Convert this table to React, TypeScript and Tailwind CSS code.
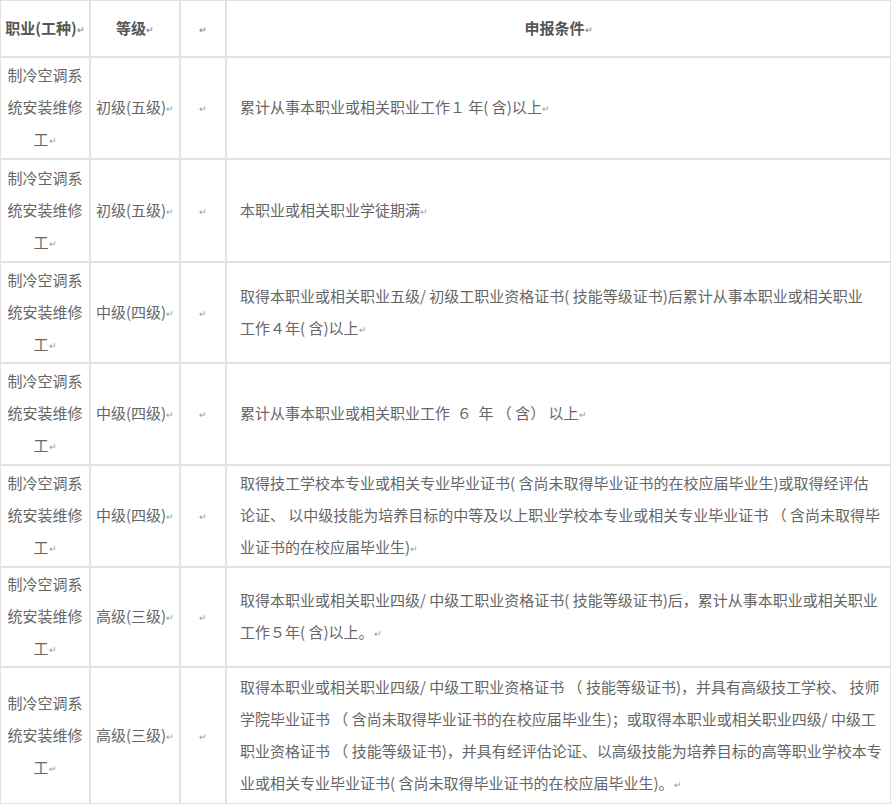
import React from 'react';

const occ = '制冷空调系统安装维修工';

const rows: { level: string; cond: string[]; h: string }[] = [
  { level: '初级(五级)', h: 'h-[102px]', cond: ['累计从事本职业或相关职业工作１ 年( 含)以上'] },
  { level: '初级(五级)', h: 'h-[103px]', cond: ['本职业或相关职业学徒期满'] },
  {
    level: '中级(四级)',
    h: 'h-[101px]',
    cond: ['取得本职业或相关职业五级/ 初级工职业资格证书( 技能等级证书)后累计从事本职业或相关职业', '工作４年( 含)以上'],
  },
  { level: '中级(四级)', h: 'h-[102px]', cond: ['累计从事本职业或相关职业工作  ６  年 （ 含） 以上'] },
  {
    level: '中级(四级)',
    h: 'h-[102px]',
    cond: [
      '取得技工学校本专业或相关专业毕业证书( 含尚未取得毕业证书的在校应届毕业生)或取得经评估',
      '论证、 以中级技能为培养目标的中等及以上职业学校本专业或相关专业毕业证书 （ 含尚未取得毕',
      '业证书的在校应届毕业生)',
    ],
  },
  {
    level: '高级(三级)',
    h: 'h-[100px]',
    cond: ['取得本职业或相关职业四级/ 中级工职业资格证书( 技能等级证书)后，累计从事本职业或相关职业', '工作５年( 含)以上。'],
  },
  {
    level: '高级(三级)',
    h: 'h-[137px]',
    cond: [
      '取得本职业或相关职业四级/ 中级工职业资格证书 （ 技能等级证书)，并具有高级技工学校、 技师',
      '学院毕业证书 （ 含尚未取得毕业证书的在校应届毕业生)；或取得本职业或相关职业四级/ 中级工',
      '职业资格证书 （ 技能等级证书)，并具有经评估论证、以高级技能为培养目标的高等职业学校本专',
      '业或相关专业毕业证书( 含尚未取得毕业证书的在校应届毕业生)。',
    ],
  },
];

function Ret() {
  return <span className="text-[9px] text-[#999] align-middle">↵</span>;
}

const cell = 'border border-[#e2e2e2] align-middle p-0';

export default function App() {
  return (
    <div
      className="w-[893px] h-[805px] overflow-hidden bg-white text-[15px] leading-[32px] text-[#666]"
      style={{ fontFamily: '"Noto Sans CJK SC", "Noto Sans", sans-serif' }}
    >
      <table className="table-fixed border-separate border-spacing-0 w-[891px]">
        <colgroup>
          <col className="w-[90px]" />
          <col className="w-[90px]" />
          <col className="w-[46px]" />
          <col className="w-[665px]" />
        </colgroup>
        <thead>
          <tr className="h-[57px] font-bold text-[#555]">
            <th className={`${cell} text-center whitespace-nowrap overflow-hidden`}>
              职业(工种)<Ret />
            </th>
            <th className={`${cell} text-center`}>
              等级<Ret />
            </th>
            <th className={`${cell} text-center`}>
              <Ret />
            </th>
            <th className={`${cell} text-center`}>
              申报条件<Ret />
            </th>
          </tr>
        </thead>
        <tbody>
          {rows.map((r, i) => (
            <tr key={i} className={r.h}>
              <td className={`${cell} text-center px-[6px]`}>
                <div className="leading-[32px]">
                  {occ.slice(0, 5)}
                  <br />
                  {occ.slice(5, 10)}
                  <br />
                  {occ.slice(10)}
                  <Ret />
                </div>
              </td>
              <td className={`${cell} text-center whitespace-nowrap`}>
                {r.level}
                <Ret />
              </td>
              <td className={`${cell} text-center`}>
                <Ret />
              </td>
              <td className={`${cell} pl-[13px] whitespace-pre`}>
                {r.cond.map((line, j) => (
                  <div key={j}>
                    {line}
                    {j === r.cond.length - 1 && <Ret />}
                  </div>
                ))}
              </td>
            </tr>
          ))}
        </tbody>
      </table>
    </div>
  );
}
